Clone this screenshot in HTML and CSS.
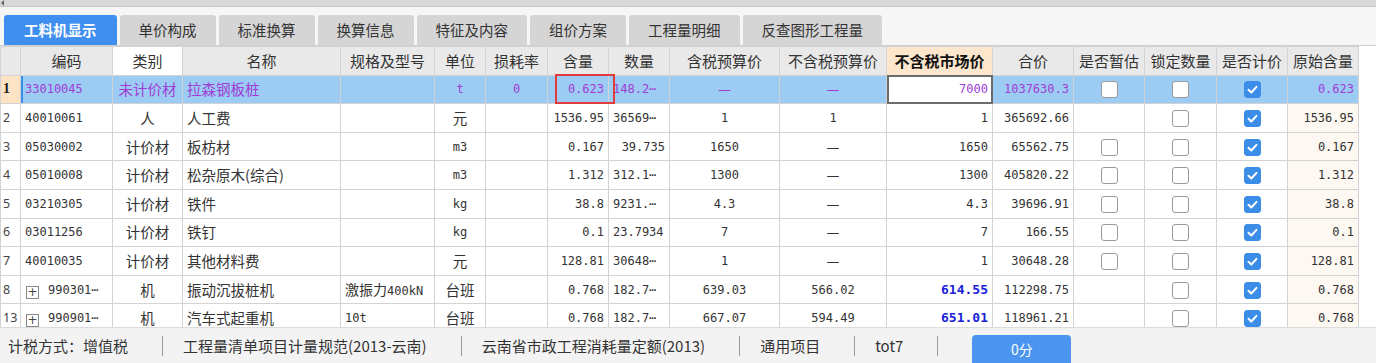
FILE: index.html
```html
<!DOCTYPE html>
<html lang="zh-CN">
<head>
  <meta charset="UTF-8" />
  <title>工料机显示</title>
  <link rel="stylesheet" href="styles.css">
</head>
<body>
<div class="topbar"><span class="arrow"></span></div>

<div class="tabs">
  <div class="tab active">工料机显示</div>
  <div class="tab">单价构成</div>
  <div class="tab">标准换算</div>
  <div class="tab">换算信息</div>
  <div class="tab">特征及内容</div>
  <div class="tab">组价方案</div>
  <div class="tab">工程量明细</div>
  <div class="tab">反查图形工程量</div>
</div>

<div class="grid">
  <table class="sheet">
    <colgroup>
      <col style="width:20px"><col style="width:92px"><col style="width:70px"><col style="width:158px">
      <col style="width:94px"><col style="width:51px"><col style="width:62px"><col style="width:61px">
      <col style="width:61px"><col style="width:110px"><col style="width:107px"><col style="width:106px">
      <col style="width:81px"><col style="width:71px"><col style="width:72px"><col style="width:71px">
      <col style="width:71px">
    </colgroup>
    <thead>
      <tr>
        <th class="rn"></th>
        <th>编码</th>
        <th class="sel">类别</th>
        <th>名称</th>
        <th>规格及型号</th>
        <th>单位</th>
        <th>损耗率</th>
        <th>含量</th>
        <th>数量</th>
        <th>含税预算价</th>
        <th>不含税预算价</th>
        <th class="hl">不含税市场价</th>
        <th>合价</th>
        <th>是否暂估</th>
        <th>锁定数量</th>
        <th>是否计价</th>
        <th>原始含量</th>
      </tr>
    </thead>
    <tbody>
      <tr class="cur">
        <td class="rn">1</td>
        <td class="first">33010045</td>
        <td class="cn c">未计价材</td>
        <td class="cn">拉森钢板桩</td>
        <td></td>
        <td class="c">t</td>
        <td class="c">0</td>
        <td class="r">0.623</td>
        <td>148.2⋯</td>
        <td class="cn c">—</td>
        <td class="cn c">—</td>
        <td class="r edit">7000</td>
        <td class="r">1037630.3</td>
        <td class="c"><span class="cb"></span></td>
        <td class="c"><span class="cb"></span></td>
        <td class="c"><span class="cb on"></span></td>
        <td class="r">0.623</td>
      </tr>
      <tr>
        <td class="rn">2</td>
        <td>40010061</td>
        <td class="cn c">人</td>
        <td class="cn">人工费</td>
        <td></td>
        <td class="cn c">元</td>
        <td></td>
        <td class="r">1536.95</td>
        <td>36569⋯</td>
        <td class="c">1</td>
        <td class="c">1</td>
        <td class="r">1</td>
        <td class="r">365692.66</td>
        <td></td>
        <td class="c"><span class="cb"></span></td>
        <td class="c"><span class="cb on"></span></td>
        <td class="r orig">1536.95</td>
      </tr>
      <tr>
        <td class="rn">3</td>
        <td>05030002</td>
        <td class="cn c">计价材</td>
        <td class="cn">板枋材</td>
        <td></td>
        <td class="c">m3</td>
        <td></td>
        <td class="r">0.167</td>
        <td class="r">39.735</td>
        <td class="c">1650</td>
        <td class="cn c">—</td>
        <td class="r">1650</td>
        <td class="r">65562.75</td>
        <td class="c"><span class="cb"></span></td>
        <td class="c"><span class="cb"></span></td>
        <td class="c"><span class="cb on"></span></td>
        <td class="r orig">0.167</td>
      </tr>
      <tr>
        <td class="rn">4</td>
        <td>05010008</td>
        <td class="cn c">计价材</td>
        <td class="cn">松杂原木(综合)</td>
        <td></td>
        <td class="c">m3</td>
        <td></td>
        <td class="r">1.312</td>
        <td>312.1⋯</td>
        <td class="c">1300</td>
        <td class="cn c">—</td>
        <td class="r">1300</td>
        <td class="r">405820.22</td>
        <td class="c"><span class="cb"></span></td>
        <td class="c"><span class="cb"></span></td>
        <td class="c"><span class="cb on"></span></td>
        <td class="r orig">1.312</td>
      </tr>
      <tr>
        <td class="rn">5</td>
        <td>03210305</td>
        <td class="cn c">计价材</td>
        <td class="cn">铁件</td>
        <td></td>
        <td class="c">kg</td>
        <td></td>
        <td class="r">38.8</td>
        <td>9231.⋯</td>
        <td class="c">4.3</td>
        <td class="cn c">—</td>
        <td class="r">4.3</td>
        <td class="r">39696.91</td>
        <td class="c"><span class="cb"></span></td>
        <td class="c"><span class="cb"></span></td>
        <td class="c"><span class="cb on"></span></td>
        <td class="r orig">38.8</td>
      </tr>
      <tr>
        <td class="rn">6</td>
        <td>03011256</td>
        <td class="cn c">计价材</td>
        <td class="cn">铁钉</td>
        <td></td>
        <td class="c">kg</td>
        <td></td>
        <td class="r">0.1</td>
        <td>23.7934</td>
        <td class="c">7</td>
        <td class="cn c">—</td>
        <td class="r">7</td>
        <td class="r">166.55</td>
        <td class="c"><span class="cb"></span></td>
        <td class="c"><span class="cb"></span></td>
        <td class="c"><span class="cb on"></span></td>
        <td class="r orig">0.1</td>
      </tr>
      <tr>
        <td class="rn">7</td>
        <td>40010035</td>
        <td class="cn c">计价材</td>
        <td class="cn">其他材料费</td>
        <td></td>
        <td class="cn c">元</td>
        <td></td>
        <td class="r">128.81</td>
        <td>30648⋯</td>
        <td class="c">1</td>
        <td class="cn c">—</td>
        <td class="r">1</td>
        <td class="r">30648.28</td>
        <td class="c"><span class="cb"></span></td>
        <td class="c"><span class="cb"></span></td>
        <td class="c"><span class="cb on"></span></td>
        <td class="r orig">128.81</td>
      </tr>
      <tr>
        <td class="rn">8</td>
        <td><span class="plus">+</span>990301⋯</td>
        <td class="cn c">机</td>
        <td class="cn">振动沉拔桩机</td>
        <td><span class="cnin">激振力</span>400kN</td>
        <td class="cn c">台班</td>
        <td></td>
        <td class="r">0.768</td>
        <td>182.7⋯</td>
        <td class="c">639.03</td>
        <td class="c">566.02</td>
        <td class="r blue">614.55</td>
        <td class="r">112298.75</td>
        <td></td>
        <td class="c"><span class="cb"></span></td>
        <td class="c"><span class="cb on"></span></td>
        <td class="r orig">0.768</td>
      </tr>
      <tr>
        <td class="rn">13</td>
        <td><span class="plus">+</span>990901⋯</td>
        <td class="cn c">机</td>
        <td class="cn">汽车式起重机</td>
        <td>10t</td>
        <td class="cn c">台班</td>
        <td></td>
        <td class="r">0.768</td>
        <td>182.7⋯</td>
        <td class="c">667.07</td>
        <td class="c">594.49</td>
        <td class="r blue">651.01</td>
        <td class="r">118961.21</td>
        <td></td>
        <td class="c"><span class="cb"></span></td>
        <td class="c"><span class="cb on"></span></td>
        <td class="r orig">0.768</td>
      </tr>
    </tbody>
  </table>
  <div class="mark"></div>
</div>

<div class="status">
  <div class="item first">计税方式：增值税</div>
  <div class="item">工程量清单项目计量规范(2013-云南)</div>
  <div class="item">云南省市政工程消耗量定额(2013)</div>
  <div class="item">通用项目</div>
  <div class="item">tot7</div>
  <div class="score">0分</div>
</div>
</body>
</html>
```

FILE: styles.css
```css
body {
  margin: 0;
  width: 1376px;
  height: 363px;
  overflow: hidden;
  background: #fff;
  font-family: "Noto Sans CJK SC", "Noto Sans", sans-serif;
  color: #333;
}
.topbar {
  height: 6px;
  background: #d8d8d8;
  border-bottom: 1px solid #c3c3c3;
  position: relative;
}
.arrow {
  position: absolute;
  left: 1px;
  top: 0;
  width: 0;
  height: 0;
  border-top: 3px solid transparent;
  border-bottom: 3px solid transparent;
  border-right: 3px solid #666;
}
.tabs {
  display: flex;
  gap: 3px;
  height: 30px;
  padding: 8px 0 0 4px;
  background: #f6f6f6;
}
.tab {
  height: 30px;
  line-height: 30px;
  padding: 0 19px;
  font-size: 14.5px;
  background: #d5d5d5;
  color: #333;
  border-radius: 3px 3px 0 0;
}
.tab.active {
  padding: 0 20px;
  background: #3f8ff0;
  color: #fff;
  font-weight: bold;
}
.grid {
  position: relative;
  height: 281px;
  overflow: hidden;
  border-top: 1px solid #cfcfcf;
}
.sheet {
  border-collapse: collapse;
  table-layout: fixed;
  width: 1358px;
}
.sheet th, .sheet td {
  border: 1px solid #d3d3d3;
  height: 27.6px;
  line-height: 18px;
  padding: 0 4px;
  white-space: nowrap;
  overflow: hidden;
}
.sheet th {
  background: #e9e9e9;
  font-weight: normal;
  font-size: 15px;
  color: #333;
}
.sheet th.sel {
  background: #fff;
}
.sheet th.hl {
  background: #fde7cc;
  font-weight: bold;
  color: #111;
}
.sheet td {
  font-family: "DejaVu Sans Mono", "Liberation Mono", monospace;
  font-size: 12px;
  color: #333;
}
.sheet td.cn {
  font-family: "Noto Sans CJK SC", sans-serif;
  font-size: 14.5px;
}
.cnin {
  font-family: "Noto Sans CJK SC", sans-serif;
  font-size: 14px;
}
.sheet td.c {
  text-align: center;
}
.sheet td.r {
  text-align: right;
}
.sheet .rn {
  padding: 0 0 0 2px;
  text-align: left;
}
.sheet td.rn {
  font-family: "Noto Sans", sans-serif;
  font-size: 12.5px;
  color: #444;
}
.sheet td.orig {
  background: #fdf8f1;
}
.sheet td.blue {
  color: #1a22d8;
  font-weight: bold;
  font-size: 13px;
}
.sheet tr.cur td {
  background: #9ccbf4;
  color: #a03dd6;
}
.sheet tr.cur td.rn {
  background: #fde3c3;
  color: #222;
  font-weight: bold;
  font-family: "Liberation Serif", serif;
  font-size: 14px;
}
.sheet tr.cur td.first {
  box-shadow: inset 2px 0 0 #3b8de6;
}
.sheet tr.cur td.edit {
  background: #fff;
  outline: 2px solid #6b6b6b;
  outline-offset: -2px;
}
.plus {
  display: inline-block;
  width: 11px;
  height: 11px;
  line-height: 10px;
  margin: 0 9px 0 1px;
  border: 1px solid #8a8a8a;
  text-align: center;
  font-family: "DejaVu Sans", sans-serif;
  font-size: 12px;
  color: #444;
  vertical-align: -2px;
}
.cb {
  display: inline-block;
  width: 15px;
  height: 15px;
  border: 1px solid #9a9a9a;
  border-radius: 3px;
  background: #fff;
  vertical-align: middle;
}
.cb.on {
  border-color: #3c8de8;
  background: #3c8de8 url("data:image/svg+xml;utf8,<svg xmlns='http://www.w3.org/2000/svg' width='15' height='15'><path d='M3.5 7.8l2.8 2.7 5.2-5.6' fill='none' stroke='white' stroke-width='2' stroke-linecap='round' stroke-linejoin='round'/></svg>") no-repeat center;
}
.mark {
  position: absolute;
  left: 555px;
  top: 28px;
  width: 56px;
  height: 26px;
  border: 2px solid #e23b3b;
}
.status {
  display: flex;
  align-items: center;
  height: 35px;
  border-top: 1px solid #dcdcdc;
  background: #f3f3f3;
  font-size: 15px;
  color: #333;
}
.item {
  padding: 0 34px 0 20px;
  line-height: 20px;
  border-right: 1px solid #9a9a9a;
}
.item.first {
  padding-left: 8px;
}
.score {
  align-self: flex-end;
  margin-left: 34px;
  width: 99px;
  height: 28px;
  line-height: 28px;
  text-align: center;
  background: #4b95f0;
  color: #fff;
  border-radius: 4px 4px 0 0;
  font-size: 14px;
}
```
